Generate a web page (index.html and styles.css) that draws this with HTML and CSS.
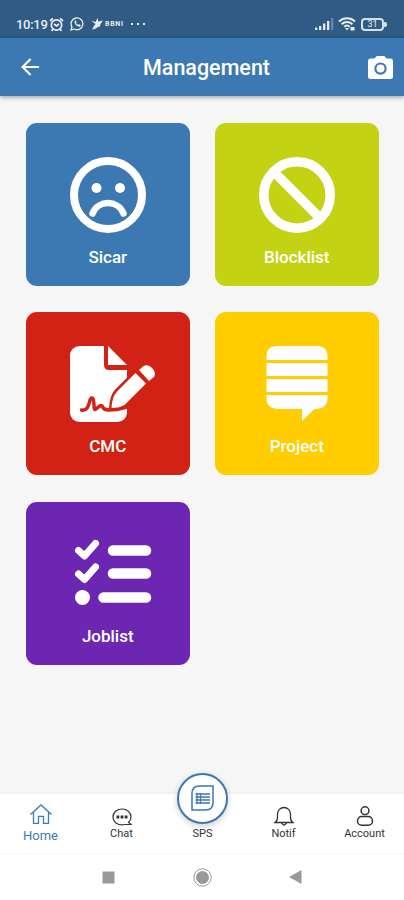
FILE: index.html
```html
<!DOCTYPE html>
<html lang="en">
<head>
  <meta charset="UTF-8" />
  <meta name="viewport" content="width=device-width, initial-scale=1.0"/>
  <title>Management</title>
  <link rel="stylesheet" href="styles.css">
</head>
<body>

<div class="status-bar">
  <span class="clock">10:19</span>
  <svg class="alarm" width="15" height="15" viewBox="0 0 15 15" fill="none" stroke="currentColor" stroke-width="1.700">
    <circle cx="7.5" cy="8" r="5.2"/>
    <path d="M1 4 4 1.3M14 4 11 1.3M5 7l2.5 2L10 7M4 12l-1.5 2M11 12l1.5 2"/>
  </svg>
  <svg class="whatsapp" width="14" height="14" viewBox="0 0 14 14" fill="none" stroke="currentColor" stroke-width="1.3">
    <path d="M1 13l.9-3.2A5.9 5.9 0 1 1 4.2 12z"/>
    <path d="M4.7 3.800c-1 3 2.600 6.600 5.400 5.800l.6-1.600-1.800-.9-.8.8C7 7.500 6.300 6.800 5.900 6l.8-.8-.8-1.700z" fill="currentColor" stroke="none"/>
  </svg>
  <svg class="bird" width="12" height="12" viewBox="0 0 12 12" fill="currentColor">
    <path d="M0 2.500l4.500 1.500L6.500 0l.8 3.500L12 2.500 9.500 6l-.5 2.500L7 9l-3 2-3 .5 2-3.500L4.500 6z"/>
  </svg>
  <span class="carrier">BBNI</span>
  <span class="dots"><i></i><i></i><i></i></span>
  <span class="spacer"></span>
  <svg class="signal" width="19" height="12" viewBox="0 0 19 12" fill="currentColor">
    <path d="M0 9.500h2.300V12H0zM4 8h2.300v4H4zM8 5.500h2.300V12H8zM12 3h2.300v9H12z"/>
    <path d="M16 0h2.300v12H16z" opacity=".3"/>
  </svg>
  <svg class="wifi" width="18" height="14" viewBox="0 0 18 14" fill="none" stroke="currentColor" stroke-width="1.900">
    <path d="M1 4.500c4.500-4.300 11.500-4.300 16 0M3.600 7.200c3-2.900 7.800-2.900 10.800 0M6.200 9.800c1.600-1.500 4-1.500 5.600 0"/>
    <path d="M7 11h4l-2 2.500zM12.500 10h4v3.500h-4z" fill="currentColor" stroke="none"/>
  </svg>
  <span class="battery">31</span>
</div>

<header class="app-bar">
  <svg width="18" height="18" viewBox="0 0 18 18" fill="none" stroke="currentColor" stroke-width="2.200">
    <path d="M18 9H1.800M9.600 1 1.600 9l8 8"/>
  </svg>
  <h1>Management</h1>
  <svg width="25" height="23" viewBox="0 0 25 23" fill="currentColor" fill-rule="evenodd">
    <path d="M8.700 0h7.600l2.200 2.600H22.500A2.500 2.500 0 0 1 25 5v15.400a2.500 2.500 0 0 1-2.500 2.500h-20A2.500 2.500 0 0 1 0 20.400V5a2.500 2.500 0 0 1 2.500-2.400h4zM12.500 6.400a6.200 6.200 0 1 0 0 12.400 6.200 6.200 0 0 0 0-12.400z"/>
    <circle cx="12.500" cy="12.600" r="4"/>
  </svg>
</header>

<main class="menu">
  <a class="tile blue">
    <svg viewBox="0 0 76 76" fill="none" stroke="currentColor">
      <circle cx="38" cy="38" r="34" stroke-width="8"/>
      <path d="M22.500 56.500C28 42.500 48 42.500 53.500 56.500" stroke-width="6.500" stroke-linecap="round"/>
      <circle cx="26.500" cy="31" r="5" fill="currentColor" stroke="none"/>
      <circle cx="50" cy="31" r="5" fill="currentColor" stroke="none"/>
    </svg>
    <span>Sicar</span>
  </a>
  <a class="tile green">
    <svg viewBox="0 0 76 76" fill="none" stroke="currentColor" stroke-width="9.500">
      <circle cx="38" cy="38" r="33.200"/>
      <path d="M15 15 61 61"/>
    </svg>
    <span>Blocklist</span>
  </a>
  <a class="tile red">
    <svg class="wide" viewBox="0 0 86 76" fill="currentColor">
      <path d="M9.500 0H34v19q0 5 5 5h18v8L45.500 43.500Q41 48 40.500 56l-.5 6q3 3 9 1.500l8-2V66.500a9.500 9.500 0 0 1-9.500 9.500h-38A9.500 9.500 0 0 1 0 66.500v-57A9.500 9.500 0 0 1 9.500 0z"/>
      <path d="M38 0 57 19H38z"/>
      <path class="ink" d="M11.500 64c9 2 7-13 10.500-12s.5 14 4 11 5.500-5 7-1.500 9 2.500 14 2l10-2.500"/>
      <path class="pencil" d="M65.500 27 76 37.500 55 58.500Q50 62 41.500 62 42 51 47 45.500z"/>
      <path d="M69 24l4-3.500q4-3 8.500 1t3 9L79 35z"/>
    </svg>
    <span>CMC</span>
  </a>
  <a class="tile yellow">
    <svg viewBox="0 0 76 76" fill="currentColor">
      <path d="M7.500 14V10.500Q7.500 0 18 0h40q10.500 0 10.500 10.500V14zM7.500 17h61v13h-61zM7.500 33h61v13h-61zM7.500 49h61v3q0 11-13 11L43 75V63H20Q7.500 63 7.500 52z"/>
    </svg>
    <span>Project</span>
  </a>
  <a class="tile purple">
    <svg class="tasks" viewBox="0 0 78 76" fill="none" stroke="currentColor" stroke-linecap="round" stroke-linejoin="round">
      <path d="M4.500 14.500 10.500 20 21.500 7.500M4.500 38 10.500 43.500 21.500 31" stroke-width="7"/>
      <path d="M39 14.500H72M39 37.500H72M29.500 61.500H72" stroke-width="10.500"/>
      <circle cx="8.500" cy="61.500" r="7.500" fill="currentColor" stroke="none"/>
    </svg>
    <span>Joblist</span>
  </a>
</main>

<nav class="tab-bar">
  <a class="tab active">
    <svg width="22" height="20" viewBox="0 0 22 20" fill="none" stroke="currentColor" stroke-width="1.300">
      <path d="M.5 10.500 11 1l10.500 9.500M3.500 8.500v10.800h5v-7h5v7h5V8.500"/>
    </svg>
    <span>Home</span>
  </a>
  <a class="tab">
    <svg width="20" height="18" viewBox="0 0 20 18" fill="none" stroke="currentColor" stroke-width="1.200">
      <path d="M19 16.500h-6.500C6 18 1 14 1 9c0-4.500 4-8 9-8s9 3.500 9 8c0 2-1 4-2.500 5.200z"/>
      <path d="M4.500 9h2.800M8.600 9h2.800M12.700 9h2.800" stroke-width="2.800"/>
    </svg>
    <span>Chat</span>
  </a>
  <a class="tab center">
    <div class="fab">
      <svg width="23" height="26" viewBox="0 0 23 26" fill="none" stroke="currentColor" stroke-width="1.500">
        <path d="M1 25V8.500Q1 1 8.500 1H22v16.500q0 7.500-7.500 7.500z"/>
        <path d="M4.500 9H19M4.500 12H19M4.500 15H19M4.500 18H19M6 8v11M9.500 8v11" stroke-width="1.300"/>
      </svg>
    </div>
    <span>SPS</span>
  </a>
  <a class="tab">
    <svg width="20" height="20" viewBox="0 0 20 20" fill="none" stroke="currentColor" stroke-width="1.300">
      <path d="M1 16.500q2.500-1.500 2.500-5V8a6.500 6.500 0 0 1 13 0v3.500q0 3.500 2.500 5zM7.500 17q2.500 4 5 0"/>
    </svg>
    <span>Notif</span>
  </a>
  <a class="tab">
    <svg width="18" height="20" viewBox="0 0 18 20" fill="none" stroke="currentColor" stroke-width="1.500">
      <circle cx="9" cy="4.700" r="3.900"/>
      <rect x="1.500" y="10.500" width="15" height="8.700" rx="4.300"/>
    </svg>
    <span>Account</span>
  </a>
</nav>

<div class="system-nav">
  <svg width="13" height="13" viewBox="0 0 13 13"><path d="M.5.5h12v12H.5z"/></svg>
  <svg width="19" height="19" viewBox="0 0 19 19">
    <circle cx="9.500" cy="9.500" r="8.700" class="ring"/>
    <circle cx="9.500" cy="9.500" r="6.500"/>
  </svg>
  <svg class="back" width="13" height="14" viewBox="0 0 13 14"><path d="M0 7 12.500 0v14z"/></svg>
</div>

</body>
</html>
```
FILE: styles.css
```css
* {
  box-sizing: border-box;
}

body {
  margin: 0;
  height: 900px;
  display: flex;
  flex-direction: column;
  font-family: Roboto, sans-serif;
  background: #f6f6f6;
  overflow: hidden;
}

svg {
  display: block;
  flex-shrink: 0;
}

.status-bar {
  height: 38px;
  padding: 10px 17px 0 16px;
  display: flex;
  align-items: center;
  background: #305b85;
  color: #e6eef5;
}

.clock {
  width: 33px;
  font-size: 13px;
  font-weight: 500;
  letter-spacing: -0.3px;
  white-space: nowrap;
}

.whatsapp {
  margin-left: 6px;
}

.bird {
  margin-left: 7px;
}

.carrier {
  width: 20px;
  margin-left: 2px;
  font-size: 7px;
  font-weight: bold;
  letter-spacing: 0.7px;
}

.dots {
  display: flex;
  gap: 4px;
  margin-left: 6px;
}

.dots i {
  width: 2px;
  height: 2px;
  background: currentColor;
}

.spacer {
  flex: 1;
}

.wifi {
  margin-left: 4px;
}

.battery {
  position: relative;
  width: 23px;
  height: 13px;
  margin: 0 3px 0 5px;
  border: 2px solid #d5e0ea;
  border-radius: 4px;
  font-size: 9px;
  line-height: 9px;
  text-align: center;
}

.battery::after {
  content: "";
  position: absolute;
  right: -5px;
  top: 2px;
  width: 3px;
  height: 5px;
  border-radius: 0 2px 2px 0;
  background: #d5e0ea;
}

.app-bar {
  position: relative;
  height: 58px;
  padding: 0 11px 0 21px;
  display: flex;
  align-items: center;
  justify-content: space-between;
  background: #3c78b1;
  color: #fff;
  box-shadow: 0 1px 5px rgba(0, 0, 0, 0.4);
}

.app-bar h1 {
  margin: 0 0 0 6px;
  font-size: 21.5px;
  font-weight: 500;
}

.menu {
  flex: 1;
  padding: 26.5px 25px 0 26px;
  display: grid;
  grid-template-columns: 163.5px 163.5px;
  grid-auto-rows: 163px;
  gap: 26.5px 25.5px;
  align-content: start;
}

.tile {
  padding-top: 34px;
  display: flex;
  flex-direction: column;
  align-items: center;
  border-radius: 11px;
  color: #fff;
}

.tile svg {
  width: 76px;
  height: 76px;
}

.tile .wide {
  width: 86px;
  margin-left: 10px;
}

.tile .tasks {
  width: 78px;
  margin-left: 10px;
}

.tile span {
  margin-top: 14px;
  font-size: 17px;
  font-weight: 500;
  line-height: 20px;
}

.blue {
  background: #3c78b1;
}

.green {
  background: #c3d313;
}

.red {
  background: #d22215;
}

.yellow {
  background: #ffcd00;
}

.purple {
  background: #6c26b2;
}

.ink {
  fill: none;
  stroke: #d22215;
  stroke-width: 3.5;
  stroke-linecap: round;
}

.pencil {
  stroke: #d22215;
  stroke-width: 5;
  paint-order: stroke;
}

.tab-bar {
  height: 59px;
  display: grid;
  grid-template-columns: repeat(5, 81px);
  background: #fff;
  box-shadow: 0 0 3px rgba(0, 0, 0, 0.05);
}

.tab {
  height: 46px;
  display: flex;
  flex-direction: column;
  align-items: center;
  justify-content: flex-end;
  color: #333;
  font-size: 11px;
}

.tab span {
  line-height: 13px;
}

.tab svg {
  margin-bottom: 1px;
}

.active {
  height: 48px;
  color: #3c7eae;
  font-size: 13px;
}

.active svg {
  margin-bottom: 5px;
}

.center {
  position: relative;
}

.fab {
  position: absolute;
  top: -21px;
  left: 15px;
  width: 51px;
  height: 51px;
  display: flex;
  align-items: center;
  justify-content: center;
  border: 2px solid #3c78b1;
  border-radius: 50%;
  background: #fff;
  color: #3c78b1;
  box-shadow: 0 2px 6px rgba(0, 0, 0, 0.2);
}

.system-nav {
  height: 47px;
  display: grid;
  grid-template-columns: repeat(3, 94px);
  justify-content: center;
  justify-items: center;
  align-items: center;
  border-top: 1px solid #f7f7f7;
  background: #fff;
  fill: #999;
}

.back {
  margin-right: 2px;
}

.ring {
  fill: none;
  stroke: #999;
}
```
